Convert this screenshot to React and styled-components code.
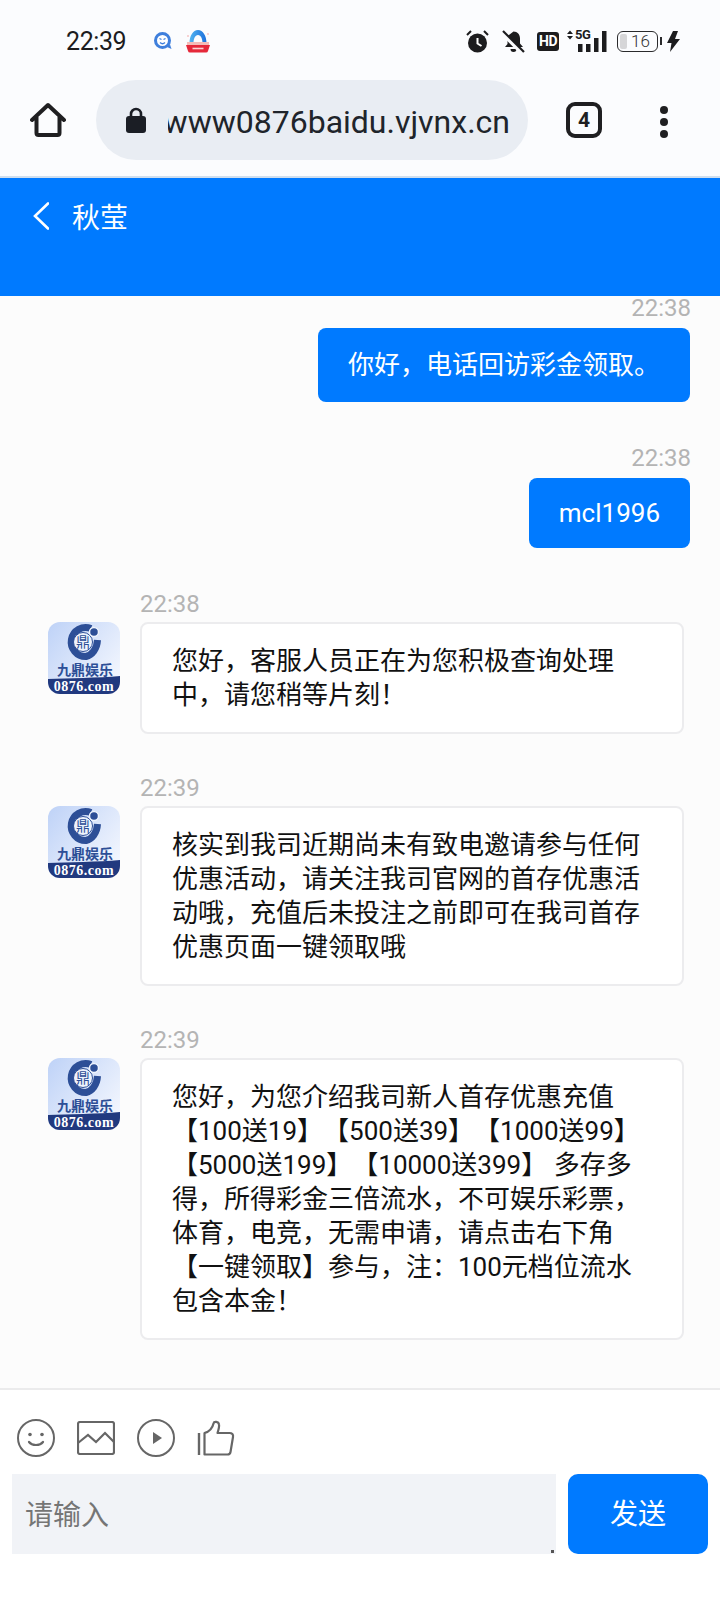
import React from "react";
import styled, { createGlobalStyle } from "styled-components";

const GlobalStyle = createGlobalStyle`
  html, body {
    margin: 0;
    padding: 0;
    background: #fcfcfc;
  }
  * {
    box-sizing: border-box;
  }
`;

const sans = `Roboto, "Noto Sans CJK SC", sans-serif`;

const messages = [
  { id: 1, side: "right", time: "22:38", text: "你好，电话回访彩金领取。", after: 44 },
  { id: 2, side: "right", time: "22:38", text: "mcl1996", compact: true, after: 42 },
  { id: 3, side: "left", time: "22:38", text: "您好，客服人员正在为您积极查询处理中，请您稍等片刻！", after: 40 },
  {
    id: 4,
    side: "left",
    time: "22:39",
    text: "核实到我司近期尚未有致电邀请参与任何优惠活动，请关注我司官网的首存优惠活动哦，充值后未投注之前即可在我司首存优惠页面一键领取哦",
    after: 40,
  },
  {
    id: 5,
    side: "left",
    time: "22:39",
    text: "您好，为您介绍我司新人首存优惠充值【100送19】【500送39】【1000送99】【5000送199】【10000送399】 多存多得，所得彩金三倍流水，不可娱乐彩票，体育，电竞，无需申请，请点击右下角【一键领取】参与，注：100元档位流水包含本金！",
    after: 0,
  },
];

const Page = styled.div`
  width: 720px;
  height: 1604px;
  display: flex;
  flex-direction: column;
  overflow: hidden;
  font-family: ${sans};
  text-spacing-trim: space-all;
`;

const TopChrome = styled.div`
  background: #fbfcfe;
`;

const StatusBar = styled.div`
  height: 80px;
  display: flex;
  align-items: center;
  padding: 2px 40px 0 66px;
  color: #1c1c1e;
`;

const Clock = styled.span`
  font-size: 25px;
  letter-spacing: -0.4px;
  margin: 1px 28px 0 0;
`;

const StatusIcons = styled.div`
  margin-left: auto;
  display: flex;
  align-items: center;
`;

const BrowserBar = styled.div`
  height: 98px;
  display: flex;
  align-items: flex-start;
  padding-left: 30px;
  border-bottom: 2px solid #cfdeee;
`;

const HomeButton = styled.div`
  width: 36px;
  height: 80px;
  display: flex;
  align-items: center;
  margin-right: 30px;
`;

const AddressPill = styled.div`
  width: 432px;
  height: 80px;
  border-radius: 40px;
  background: #e9edf3;
  display: flex;
  align-items: center;
  padding-left: 30px;
`;

const UrlClip = styled.div`
  width: 342px;
  margin: 3px 0 0 22px;
  overflow: hidden;
  direction: rtl;
  white-space: nowrap;
  font-size: 32px;
  color: #20242a;
`;

const TabCount = styled.div`
  width: 36px;
  height: 36px;
  margin: 22px 0 0 38px;
  border: 4px solid #1f1f21;
  border-radius: 9px;
  display: flex;
  align-items: center;
  justify-content: center;
  font-size: 21px;
  font-weight: 700;
  color: #1f1f21;
`;

const MenuDots = styled.div`
  margin: 26px 0 0 58px;
  display: flex;
  flex-direction: column;
  gap: 4px;
`;

const Dot = styled.span`
  width: 8px;
  height: 8px;
  border-radius: 50%;
  background: #1f1f21;
`;

const ChatHeader = styled.header`
  height: 118px;
  flex-shrink: 0;
  background: #007aff;
  color: #fff;
  display: flex;
  align-items: flex-start;
  padding: 24px 0 0 33px;
`;

const Title = styled.h1`
  margin: 1px 0 0 23px;
  font-size: 28px;
  font-weight: 400;
  line-height: 32px;
`;

const MessageList = styled.main`
  flex: 1;
  padding: 0 30px 0 48px;
  display: flex;
  flex-direction: column;
`;

const MessageRow = styled.section`
  display: flex;
  flex-direction: column;
  align-items: ${(p) => (p.$side === "right" ? "flex-end" : "stretch")};
  margin-bottom: ${(p) => p.$after}px;
`;

const Time = styled.time`
  display: block;
  font-size: 24px;
  line-height: 24px;
  color: #b4b4b4;
  ${(p) =>
    p.$side === "left"
      ? "margin: 2px 0 6px 92px;"
      : "margin: 0 -1px 8px 0;"}
`;

const BubbleLine = styled.div`
  display: flex;
  align-items: flex-start;
  gap: 20px;
`;

const OutgoingBubble = styled.div`
  background: #007aff;
  color: #fff;
  border-radius: 8px;
  font-size: 26px;
  line-height: 34px;
  padding: ${(p) => (p.$compact ? "18px 30px" : "20px 30px")};
`;

const IncomingBubble = styled.div`
  width: 544px;
  background: #fff;
  border: 2px solid #ececee;
  border-radius: 8px;
  font-size: 26px;
  line-height: 34px;
  color: #111;
  padding: 20px 30px;
`;

const Composer = styled.footer`
  height: 216px;
  flex-shrink: 0;
  background: #fff;
  border-top: 2px solid #ebebec;
  padding: 28px 12px 0;
`;

const ToolRow = styled.div`
  display: flex;
  align-items: center;
  gap: 22px;
  height: 40px;
  padding-left: 5px;
  margin-bottom: 16px;
`;

const InputRow = styled.div`
  display: flex;
  gap: 12px;
`;

const InputWrap = styled.div`
  position: relative;
  width: 544px;
  height: 80px;

  /* the tiny resize mark in the corner */
  &::after {
    content: "";
    position: absolute;
    right: 2px;
    bottom: 1px;
    width: 3px;
    height: 3px;
    background: #555;
  }
`;

const MessageInput = styled.textarea`
  display: block;
  width: 100%;
  height: 100%;
  border: none;
  outline: none;
  border-radius: 0;
  resize: none;
  background: #f1f3f7;
  font-family: ${sans};
  font-size: 28px;
  line-height: 34px;
  padding: 25px 13px 0;
  color: #333;

  &::placeholder {
    color: #757575;
    opacity: 1;
  }
`;

const SendButton = styled.button`
  width: 140px;
  height: 80px;
  border: none;
  border-radius: 10px;
  background: #007aff;
  color: #fff;
  font-family: ${sans};
  font-size: 28px;
  padding: 0 0 4px;
`;

const IconSvg = styled.svg`
  display: block;
  flex-shrink: 0;
  margin-left: ${(p) => p.$ml || 0}px;
`;

// status bar glyphs
const AlarmIcon = () => (
  <IconSvg width="23" height="23" viewBox="0 0 23 23">
    <circle cx="11.500" cy="13" r="9.500" fill="#1c1c1e" />
    <path d="M11.500 8v5.500l4 2.500" fill="none" stroke="#fff" strokeWidth="2" />
    <path d="M1 5l4-4M22 5l-4-4" stroke="#1c1c1e" strokeWidth="2" />
  </IconSvg>
);

const BellOffIcon = () => (
  <IconSvg width="23" height="23" viewBox="0 0 23 23" $ml={13}>
    <path d="M11.500 1.500c4 0 6.500 3 6.500 7v5l3 3.500H3l2.500-3V6z" fill="#1c1c1e" />
    <path d="M8.500 19h6a3 3 0 0 1-6 0z" fill="#1c1c1e" />
    <path d="M0 3l20 20" stroke="#fbfcfe" strokeWidth="4" />
    <path d="M1 1l21 21" stroke="#1c1c1e" strokeWidth="2.200" />
  </IconSvg>
);

const HdBadge = styled.span`
  width: 22px;
  height: 19px;
  margin-left: 12px;
  border-radius: 3px;
  background: #1c1c1e;
  color: #fff;
  font-size: 14px;
  font-weight: 700;
  line-height: 19px;
  text-align: center;
  letter-spacing: -0.4px;
`;

const SignalWrap = styled.div`
  position: relative;
  width: 40px;
  height: 22px;
  margin-left: 8px;
`;

const NetLabel = styled.span`
  position: absolute;
  left: 8px;
  top: -2px;
  font-size: 13px;
  font-weight: 700;
  line-height: 13px;
  letter-spacing: -0.4px;
  color: #1c1c1e;
`;

const SignalIcon = () => (
  <SignalWrap>
    <IconSvg width="40" height="22" viewBox="0 0 40 22">
      <path d="M0 4l3-3.500L6 4zM0 6l3 3.500L6 6z" fill="#1c1c1e" />
      <path d="M11 14h4.500v8H11zM19 14h4.500v8H19zM27 8h4.500v14H27zM35 1h4.500v21H35z" fill="#1c1c1e" />
    </IconSvg>
    <NetLabel>5G</NetLabel>
  </SignalWrap>
);

const BatteryShell = styled.div`
  position: relative;
  width: 41px;
  height: 21px;
  margin-left: 10px;
  border: 1.5px solid #2a2a2c;
  border-radius: 6px;
  font-size: 17px;
  line-height: 18px;
  text-align: center;
  padding-left: 6px;
  color: #333;
  font-weight: 300;

  &::before {
    content: "";
    position: absolute;
    left: 2px;
    top: 2px;
    bottom: 2px;
    width: 7px;
    background: #d6d6d8;
    border-radius: 2px;
  }

  &::after {
    content: "";
    position: absolute;
    right: -5px;
    top: 5px;
    width: 2px;
    height: 8px;
    background: #2a2a2c;
  }
`;

const BoltIcon = () => (
  <IconSvg width="13" height="21" viewBox="0 0 13 21" $ml={9}>
    <path d="M6 0L0 12h4.500L3 21 13 8H8l3-8z" fill="#1c1c1e" />
  </IconSvg>
);

// notification glyphs next to the clock
const QqMailIcon = () => (
  <IconSvg width="18" height="18" viewBox="0 0 18 18">
    <circle cx="8.500" cy="8.500" r="7" fill="#fff" stroke="#3f7fdc" strokeWidth="3" />
    <path d="M5.500 6.500l2 1M11.500 6.500l-2 1M6 10.500c1.500 1.500 3.500 1.500 5 0" stroke="#3f7fdc" strokeWidth="1.300" fill="none" />
    <path d="M13 15l4.500 2-1.500-4.500z" fill="#3f7fdc" />
  </IconSvg>
);

const GiftBasketIcon = () => (
  <IconSvg width="26" height="24" viewBox="0 0 26 24" $ml={13}>
    <defs>
      <linearGradient id="archFill" x1="0" y1="0" x2="1" y2="0">
        <stop offset="0" stopColor="#52b4f0" />
        <stop offset="1" stopColor="#1c6fdc" />
      </linearGradient>
    </defs>
    <path d="M4.500 14C4.500 7 8 1 13 1s8.500 6 8.500 13h-4c0-4-1.500-8-4.500-8s-4.500 4-4.500 8z" fill="url(#archFill)" />
    <circle cx="3" cy="7" r="1" fill="#f6c4c4" />
    <circle cx="23" cy="5" r="1" fill="#f6c4c4" />
    <path d="M2 13h22v3H2z" fill="#f4bcb8" />
    <path d="M1 16h24l-2 6a2 2 0 0 1-2 1.500H5A2 2 0 0 1 3 22z" fill="#e5283a" />
    <path d="M7.500 19.500h11" stroke="#fbd5d5" strokeWidth="1.600" />
  </IconSvg>
);

// browser chrome glyphs
const HomeIcon = () => (
  <IconSvg width="36" height="36" viewBox="0 0 36 36">
    <path
      d="M2 18L18 3l16 15M6.500 15v16a2 2 0 0 0 2 2h19a2 2 0 0 0 2-2V15"
      fill="none"
      stroke="#1f1f21"
      strokeWidth="4"
      strokeLinecap="round"
      strokeLinejoin="round"
    />
  </IconSvg>
);

const LockIcon = () => (
  <IconSvg width="20" height="26" viewBox="0 0 20 26">
    <path d="M5 11V7a5 5 0 0 1 10 0v4" fill="none" stroke="#1b1e25" strokeWidth="2.600" />
    <rect x="0" y="9" width="20" height="17" rx="3" fill="#1b1e25" />
  </IconSvg>
);

const BackIcon = () => (
  <IconSvg width="16" height="28" viewBox="0 0 16 28">
    <path d="M15 1.500L2 14l13 12.500" fill="none" stroke="#fff" strokeWidth="2.600" strokeLinecap="round" />
  </IconSvg>
);

// composer tools
const SmileIcon = () => (
  <IconSvg width="38" height="38" viewBox="0 0 38 38">
    <circle cx="19" cy="19" r="18" fill="none" stroke="#666" strokeWidth="2" />
    <circle cx="13" cy="15.500" r="1.800" fill="#666" />
    <circle cx="25" cy="15.500" r="1.800" fill="#666" />
    <path d="M12 23c3 4 11 4 14 0" fill="none" stroke="#666" strokeWidth="2.200" strokeLinecap="round" />
  </IconSvg>
);

const PictureIcon = () => (
  <IconSvg width="38" height="34" viewBox="0 0 38 34">
    <rect x="1" y="1" width="36" height="32" rx="2" fill="none" stroke="#666" strokeWidth="2.200" />
    <path d="M1 22l10-8 8 7 9-9 9 9" fill="none" stroke="#666" strokeWidth="2.200" />
  </IconSvg>
);

const PlayIcon = () => (
  <IconSvg width="38" height="38" viewBox="0 0 38 38">
    <circle cx="19" cy="19" r="18" fill="none" stroke="#666" strokeWidth="2" />
    <path d="M16 13l9 6-9 6z" fill="#666" />
  </IconSvg>
);

const ThumbIcon = () => (
  <IconSvg width="38" height="36" viewBox="0 0 38 36">
    <path d="M2 13v22" stroke="#666" strokeWidth="2.400" />
    <path
      d="M7.500 34.500V13c5-1.500 8-5 9-9.500.5-2.500 5-2 5.500 1 .5 2.500-.5 5.500-1.500 8.500h12c2.500 0 4 1.500 3.500 4l-2.500 15c-.3 1.700-1.500 2.500-3 2.500z"
      fill="none"
      stroke="#666"
      strokeWidth="2.200"
      strokeLinejoin="round"
    />
  </IconSvg>
);

// agent avatar
const BrandAvatar = () => (
  <IconSvg width="72" height="72" viewBox="0 0 72 72">
    <defs>
      <linearGradient id="avatarBg" x1="0" y1="0" x2="1" y2="0.800">
        <stop offset="0" stopColor="#bed2f7" />
        <stop offset="1" stopColor="#f4f7fe" />
      </linearGradient>
      <clipPath id="avatarClip">
        <rect width="72" height="72" rx="12" />
      </clipPath>
    </defs>
    <g clipPath="url(#avatarClip)">
      <rect width="72" height="72" fill="url(#avatarBg)" />
      <path
        d="M43 6.500A14.500 14.500 0 1 0 38 34.500C44 33 49 27 49.500 18"
        fill="none"
        stroke="#2d4f97"
        strokeWidth="7"
      />
      <circle cx="35" cy="20" r="9.500" fill="#eef3fc" stroke="#2d4f97" strokeWidth="1" />
      <text x="35" y="25" textAnchor="middle" fontSize="14" fill="#2d4f97" fontFamily={`"Noto Sans CJK SC", sans-serif`}>
        鼎
      </text>
      <circle cx="46" cy="10" r="4.500" fill="#2d4f97" stroke="#eef3fc" strokeWidth="1.500" />
      <text x="37" y="53" textAnchor="middle" fontSize="14" fontWeight="700" fill="#2d4f97" fontFamily={`"Noto Sans CJK SC", sans-serif`}>
        九鼎娱乐
      </text>
      <path d="M0 57c20-1 50-1 72-3v18H0z" fill="#21397f" />
      <text x="36" y="69" textAnchor="middle" fontSize="14" fontWeight="700" fill="#fff" letterSpacing=".5" fontFamily={`"Liberation Serif", serif`}>
        0876.com
      </text>
    </g>
  </IconSvg>
);

function Message({ side, time, text, compact, after }) {
  return (
    <MessageRow $side={side} $after={after}>
      <Time $side={side}>{time}</Time>
      {side === "right" ? (
        <OutgoingBubble $compact={compact}>{text}</OutgoingBubble>
      ) : (
        <BubbleLine>
          <BrandAvatar />
          <IncomingBubble>{text}</IncomingBubble>
        </BubbleLine>
      )}
    </MessageRow>
  );
}

export default function App() {
  return (
    <Page>
      <GlobalStyle />
      <TopChrome>
        <StatusBar>
          <Clock>22:39</Clock>
          <QqMailIcon />
          <GiftBasketIcon />
          <StatusIcons>
            <AlarmIcon />
            <BellOffIcon />
            <HdBadge>HD</HdBadge>
            <SignalIcon />
            <BatteryShell>16</BatteryShell>
            <BoltIcon />
          </StatusIcons>
        </StatusBar>
        <BrowserBar>
          <HomeButton>
            <HomeIcon />
          </HomeButton>
          <AddressPill>
            <LockIcon />
            <UrlClip>www0876baidu.vjvnx.cn</UrlClip>
          </AddressPill>
          <TabCount>4</TabCount>
          <MenuDots>
            <Dot />
            <Dot />
            <Dot />
          </MenuDots>
        </BrowserBar>
      </TopChrome>
      <ChatHeader>
        <BackIcon />
        <Title>秋莹</Title>
      </ChatHeader>
      <MessageList>
        {messages.map((m) => (
          <Message key={m.id} {...m} />
        ))}
      </MessageList>
      <Composer>
        <ToolRow>
          <SmileIcon />
          <PictureIcon />
          <PlayIcon />
          <ThumbIcon />
        </ToolRow>
        <InputRow>
          <InputWrap>
            <MessageInput placeholder="请输入" />
          </InputWrap>
          <SendButton>发送</SendButton>
        </InputRow>
      </Composer>
    </Page>
  );
}
